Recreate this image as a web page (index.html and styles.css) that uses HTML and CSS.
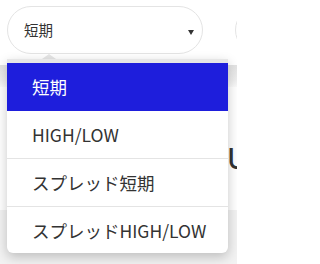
FILE: index.html
```html
<!DOCTYPE html>
<html lang="ja">
<head>
<meta charset="utf-8">
<link rel="stylesheet" href="styles.css">
</head>
<body>
<div class="page">
  <div class="header">
    <div class="pill">
      <span class="pill-text">短期</span>
      <span class="pill-arrow"></span>
    </div>
    <div class="pill pill-next"></div>
  </div>
  <div class="band"></div>
  <div class="content">
    <div class="big">U</div>
  </div>
  <div class="footer"></div>

  <div class="dropdown">
    <div class="caret"></div>
    <ul class="menu">
      <li class="item active">短期</li>
      <li class="item">HIGH/LOW</li>
      <li class="item">スプレッド短期</li>
      <li class="item last">スプレッドHIGH/LOW</li>
    </ul>
  </div>
</div>
</body>
</html>
```
FILE: styles.css
```css
html, body {
  margin: 0;
  padding: 0;
  background: #ffffff;
}
body {
  font-family: "Noto Sans CJK JP", "Noto Sans", sans-serif;
  color: #333333;
}
.page {
  position: relative;
  width: 237px;
  height: 264px;
  overflow: hidden;
}
.header {
  display: flex;
  gap: 32px;
  padding: 6px 0 0 7px;
  height: 59px;
  overflow: hidden;
  box-sizing: content-box;
}
.pill {
  flex: 0 0 auto;
  width: 196px;
  height: 48px;
  box-sizing: border-box;
  border: 1px solid #e4e4e4;
  border-radius: 24px;
  display: flex;
  align-items: center;
  justify-content: space-between;
  padding: 0 8px 0 16px;
  background: #fff;
}
.pill-text {
  font-size: 14.5px;
  line-height: 1;
  color: #333;
}
.pill-arrow {
  width: 0;
  height: 0;
  border-left: 3px solid transparent;
  border-right: 3px solid transparent;
  border-top: 5px solid #333;
  margin-top: 4px;
}
.band {
  height: 22px;
  background: linear-gradient(#e2e2e2, #efefef 70%, #fafafa);
}
.content {
  height: 123px;
  background: #fff;
  padding-top: 56px;
  box-sizing: border-box;
}
.big {
  padding-left: 227px;
  font-size: 29px;
  line-height: 1;
  font-family: "Noto Sans", sans-serif;
  font-weight: 500;
  white-space: nowrap;
  color: #333;
}
.footer {
  height: 60px;
  background: #f2f2f2;
}
.dropdown {
  position: absolute;
  left: 7px;
  top: 54px;
  width: 221px;
}
.caret {
  width: 0;
  height: 0;
  margin-left: 35px;
  border-left: 7px solid transparent;
  border-right: 7px solid transparent;
  border-bottom: 5px solid #e6e6e6;
}
.menu {
  list-style: none;
  margin: 0;
  padding: 0;
  background: #fff;
  border-top: 4px solid #e6e6e6;
  border-radius: 0 0 6px 6px;
  box-shadow: 0 4px 12px rgba(0, 0, 0, 0.22);
  overflow: hidden;
}
.item {
  height: 47px;
  border-bottom: 1px solid #e4e4e4;
  display: flex;
  align-items: center;
  padding-left: 25px;
  font-size: 17.5px;
  color: #333;
}
.item.active {
  background: #1e1edc;
  color: #fff;
  border-bottom-color: #1e1edc;
}
.item.last {
  border-bottom: none;
  height: 46px;
}
```
